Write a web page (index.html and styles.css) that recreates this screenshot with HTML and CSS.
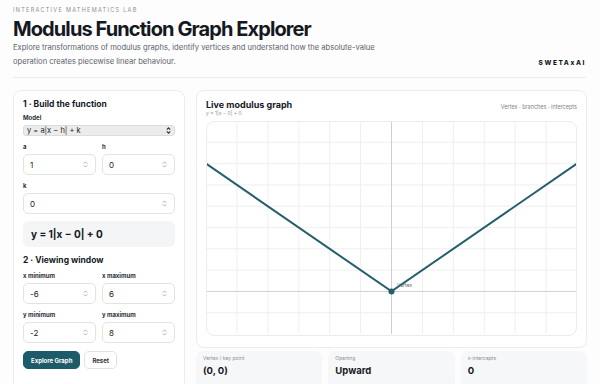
FILE: index.html
```html
<!DOCTYPE html>
<html lang="en">
<head>
    <meta charset="UTF-8">
    <meta name="viewport" content="width=device-width, initial-scale=1.0">
    <title>Modulus Function Graph Explorer</title>
    <link rel="stylesheet" href="styles.css">
</head>
<body>
    <div class="page">
        <header class="top">
            <p class="eyebrow">INTERACTIVE MATHEMATICS LAB</p>
            <h1>Modulus Function Graph Explorer</h1>
            <div class="top-row">
                <p class="lead">Explore transformations of modulus graphs, identify vertices and understand how the absolute-value operation creates piecewise linear behaviour.</p>
                <span class="brand">SWETAxAI</span>
            </div>
        </header>

        <main class="layout">
            <section class="card controls">
                <h3>1 · Build the function</h3>
                <label class="lbl">Model</label>
                <div class="select">
                    <span>y = a|x − h| + k</span>
                    <svg width="5" height="7" viewBox="0 0 5 7"><path d="M0.8 2.6 2.5 0.9 4.2 2.6M0.8 4.4 2.5 6.1 4.2 4.4" fill="none" stroke="#333" stroke-width="1.1"/></svg>
                </div>

                <div class="pair">
                    <div class="field">
                        <label class="lbl">a</label>
                        <div class="input"><span>1</span><svg width="5" height="7" viewBox="0 0 5 7"><path d="M0.8 2.6 2.5 0.9 4.2 2.6M0.8 4.4 2.5 6.1 4.2 4.4" fill="none" stroke="#999" stroke-width="0.8"/></svg></div>
                    </div>
                    <div class="field">
                        <label class="lbl">h</label>
                        <div class="input"><span>0</span><svg width="5" height="7" viewBox="0 0 5 7"><path d="M0.8 2.6 2.5 0.9 4.2 2.6M0.8 4.4 2.5 6.1 4.2 4.4" fill="none" stroke="#999" stroke-width="0.8"/></svg></div>
                    </div>
                </div>
                <div class="field">
                    <label class="lbl">k</label>
                    <div class="input"><span>0</span><svg width="5" height="7" viewBox="0 0 5 7"><path d="M0.8 2.6 2.5 0.9 4.2 2.6M0.8 4.4 2.5 6.1 4.2 4.4" fill="none" stroke="#999" stroke-width="0.8"/></svg></div>
                </div>

                <div class="formula">y = 1|x − 0| + 0</div>

                <h3>2 · Viewing window</h3>
                <div class="pair">
                    <div class="field">
                        <label class="lbl">x minimum</label>
                        <div class="input"><span>-6</span><svg width="5" height="7" viewBox="0 0 5 7"><path d="M0.8 2.6 2.5 0.9 4.2 2.6M0.8 4.4 2.5 6.1 4.2 4.4" fill="none" stroke="#999" stroke-width="0.8"/></svg></div>
                    </div>
                    <div class="field">
                        <label class="lbl">x maximum</label>
                        <div class="input"><span>6</span><svg width="5" height="7" viewBox="0 0 5 7"><path d="M0.8 2.6 2.5 0.9 4.2 2.6M0.8 4.4 2.5 6.1 4.2 4.4" fill="none" stroke="#999" stroke-width="0.8"/></svg></div>
                    </div>
                </div>
                <div class="pair">
                    <div class="field">
                        <label class="lbl">y minimum</label>
                        <div class="input"><span>-2</span><svg width="5" height="7" viewBox="0 0 5 7"><path d="M0.8 2.6 2.5 0.9 4.2 2.6M0.8 4.4 2.5 6.1 4.2 4.4" fill="none" stroke="#999" stroke-width="0.8"/></svg></div>
                    </div>
                    <div class="field">
                        <label class="lbl">y maximum</label>
                        <div class="input"><span>8</span><svg width="5" height="7" viewBox="0 0 5 7"><path d="M0.8 2.6 2.5 0.9 4.2 2.6M0.8 4.4 2.5 6.1 4.2 4.4" fill="none" stroke="#999" stroke-width="0.8"/></svg></div>
                    </div>
                </div>

                <div class="buttons">
                    <button class="btn primary">Explore Graph</button>
                    <button class="btn ghost">Reset</button>
                </div>
            </section>

            <div class="right">
                <section class="card graph-card">
                    <div class="graph-head">
                        <div>
                            <h2>Live modulus graph</h2>
                            <p class="eq">y = 1|x − 0| + 0</p>
                        </div>
                        <span class="legend">Vertex · branches · intercepts</span>
                    </div>
                    <div class="graph">
                        <svg width="371" height="213" viewBox="0 0 371 213">
                            <g stroke="#efefef" stroke-width="1">
                                <line x1="30.9" y1="0" x2="30.9" y2="213"/>
                                <line x1="61.8" y1="0" x2="61.8" y2="213"/>
                                <line x1="92.8" y1="0" x2="92.8" y2="213"/>
                                <line x1="123.7" y1="0" x2="123.7" y2="213"/>
                                <line x1="154.6" y1="0" x2="154.6" y2="213"/>
                                <line x1="216.4" y1="0" x2="216.4" y2="213"/>
                                <line x1="247.3" y1="0" x2="247.3" y2="213"/>
                                <line x1="278.3" y1="0" x2="278.3" y2="213"/>
                                <line x1="309.2" y1="0" x2="309.2" y2="213"/>
                                <line x1="340.1" y1="0" x2="340.1" y2="213"/>
                                <line x1="0" y1="21.3" x2="371" y2="21.3"/>
                                <line x1="0" y1="42.6" x2="371" y2="42.6"/>
                                <line x1="0" y1="63.9" x2="371" y2="63.9"/>
                                <line x1="0" y1="85.2" x2="371" y2="85.2"/>
                                <line x1="0" y1="106.5" x2="371" y2="106.5"/>
                                <line x1="0" y1="127.8" x2="371" y2="127.8"/>
                                <line x1="0" y1="149.1" x2="371" y2="149.1"/>
                                <line x1="0" y1="191.7" x2="371" y2="191.7"/>
                            </g>
                            <g stroke="#cfcfcf" stroke-width="1">
                                <line x1="185.5" y1="0" x2="185.5" y2="213"/>
                                <line x1="0" y1="170.4" x2="371" y2="170.4"/>
                            </g>
                            <polyline points="0,42.6 185.5,170.4 371,42.6" fill="none" stroke="#255f6c" stroke-width="2"/>
                            <circle cx="185.5" cy="170.4" r="3" fill="#255f6c"/>
                            <text x="191" y="166" font-size="5" fill="#666" font-family="Inter, sans-serif">Vertex</text>
                        </svg>
                    </div>
                </section>

                <div class="stats">
                    <div class="stat">
                        <span class="stat-label">Vertex / key point</span>
                        <span class="stat-value">(0, 0)</span>
                    </div>
                    <div class="stat">
                        <span class="stat-label">Opening</span>
                        <span class="stat-value">Upward</span>
                    </div>
                    <div class="stat">
                        <span class="stat-label">x-intercepts</span>
                        <span class="stat-value">0</span>
                    </div>
                </div>
            </div>
        </main>
    </div>
</body>
</html>
```

FILE: styles.css
```css
body {
    margin: 0;
    font-family: Inter, "Noto Sans", sans-serif;
    background-color: #fdfdfd;
    color: #15191f;
}

.page {
    padding: 0 14px 0 13px;
}

.top {
    padding-top: 7px;
    padding-bottom: 8px;
    border-bottom: 1px solid #ececec;
}

.eyebrow {
    margin: 0;
    font-size: 5.5px;
    line-height: 7px;
    letter-spacing: 1.3px;
    color: #8a8f96;
}

h1 {
    margin: 3px 0 0;
    font-size: 20px;
    font-weight: 700;
    letter-spacing: -0.9px;
    line-height: 24px;
}

.top-row {
    display: flex;
    justify-content: space-between;
    align-items: flex-end;
}

.lead {
    margin: 0;
    max-width: 380px;
    font-size: 7.6px;
    line-height: 14px;
    color: #5c636b;
}

.brand {
    font-size: 6.5px;
    font-weight: 800;
    letter-spacing: 1.6px;
    padding-bottom: 2px;
}

.layout {
    display: grid;
    grid-template-columns: 172px 1fr;
    gap: 11px;
    margin-top: 12px;
}

.card {
    background: #fff;
    border: 1px solid #ececec;
    border-radius: 8px;
}

.controls {
    padding: 8px 9px 20px;
    display: flex;
    flex-direction: column;
}

h3 {
    margin: 0;
    font-size: 8.5px;
    font-weight: 700;
    line-height: 10px;
}

.lbl {
    display: block;
    font-size: 6px;
    font-weight: 700;
    color: #2b3038;
    line-height: 8px;
    margin: 5px 0 3px;
}

.select {
    display: flex;
    justify-content: space-between;
    align-items: center;
    height: 9px;
    padding: 0 3px;
    background: #ececec;
    border: 1px solid #dcdcdc;
    border-radius: 3px;
    font-size: 7.5px;
    color: #222;
}

.pair {
    display: grid;
    grid-template-columns: 1fr 1fr;
    gap: 6px;
}

.field {
    display: flex;
    flex-direction: column;
}

.field .lbl {
    margin-top: 7px;
}

.input {
    display: flex;
    justify-content: space-between;
    align-items: center;
    height: 19px;
    padding: 0 7px 0 6px;
    border: 1px solid #e3e3e3;
    border-radius: 5px;
    background: #fff;
    font-size: 8px;
    color: #222;
}

.formula {
    margin-top: 7px;
    margin-bottom: 8px;
    padding: 0 8px;
    height: 26px;
    line-height: 26px;
    background: #f3f5f7;
    border-radius: 6px;
    font-size: 10px;
    font-weight: 700;
}

.buttons {
    display: flex;
    gap: 4px;
    margin-top: 8px;
}

.btn {
    font-family: inherit;
    font-size: 6px;
    font-weight: 700;
    height: 18px;
    border-radius: 5px;
    padding: 0 7px;
}

.primary {
    background-color: #1e5b69;
    color: #fff;
    border: 1px solid #1e5b69;
}

.ghost {
    background: #fff;
    color: #333;
    border: 1px solid #e2e2e2;
}

.right {
    display: flex;
    flex-direction: column;
    gap: 3px;
}

.graph-card {
    padding: 8px 9px 11px;
}

.graph-head {
    display: flex;
    justify-content: space-between;
    align-items: flex-start;
    height: 22px;
}

h2 {
    margin: 0;
    font-size: 9px;
    font-weight: 700;
    line-height: 11px;
}

.eq {
    margin: 0;
    font-size: 5px;
    color: #8d9197;
}

.legend {
    font-size: 5.5px;
    color: #80858b;
    margin-top: 5px;
}

.graph {
    height: 213px;
    border: 1px solid #ececec;
    border-radius: 8px;
    overflow: hidden;
    background: #fff;
}

.graph svg {
    display: block;
    margin: -1px;
}

.stats {
    display: grid;
    grid-template-columns: 1fr 1fr 1fr;
    gap: 6px;
}

.stat {
    display: flex;
    flex-direction: column;
    background: #f6f7f9;
    border-radius: 7px;
    padding: 4px 7px 12px;
}

.stat-label {
    font-size: 5px;
    line-height: 7px;
    color: #8a8f96;
}

.stat-value {
    font-size: 9.5px;
    font-weight: 700;
    margin-top: 3px;
}
```
